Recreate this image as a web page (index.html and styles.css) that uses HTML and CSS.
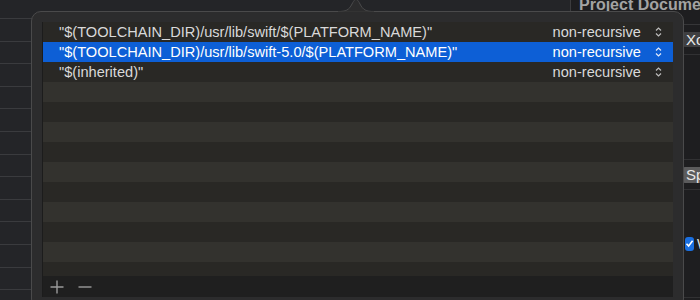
FILE: index.html
```html
<!DOCTYPE html>
<html lang="en">
<head>
    <meta charset="UTF-8">
    <title>Header Search Paths</title>
    <link rel="stylesheet" href="styles.css">
</head>
<body>
    <div class="window">
        <div class="editor">
            <div class="editor-row"></div>
            <div class="editor-row"></div>
            <div class="editor-row"></div>
            <div class="editor-row"></div>
            <div class="editor-row"></div>
            <div class="editor-row"></div>
            <div class="editor-row"></div>
            <div class="editor-row"></div>
            <div class="editor-row"></div>
            <div class="editor-row"></div>
            <div class="editor-row"></div>
            <div class="editor-row"></div>
            <div class="editor-row"></div>
            <div class="editor-row"></div>
        </div>

        <aside class="inspector">
            <h3>Project Document</h3>
            <div class="inspector-field first">
                <span class="popup-button">Xcode 11.0-compatible</span>
            </div>
            <div class="inspector-field tall"></div>
            <div class="inspector-field">
                <span class="popup-button light">Specify</span>
            </div>
            <div class="inspector-field check">
                <span class="checkbox">
                    <svg width="9" height="9" viewBox="0 0 9 9"><path d="M1.5 4.8 L3.6 7 L7.6 1.8" fill="none" stroke="#fff" stroke-width="1.6"/></svg>
                </span>
                <span class="check-label">Workspace</span>
            </div>
        </aside>

        <div class="popover">
            <svg class="popover-arrow" width="36" height="13" viewBox="0 0 36 13">
                <path d="M0 12.5 C8 12.5 11 11 14 5 C16 1 17 0.5 18 0.5 C19 0.5 20 1 22 5 C25 11 28 12.5 36 12.5" fill="#2c2c2d" stroke="#4a4a4b" stroke-width="1"/>
                <rect x="0" y="12.5" width="36" height="1" fill="#2c2c2d"/>
            </svg>
            <div class="path-table">
                <div class="path-list">
                    <div class="path-row">
                        <span class="path-value">"$(TOOLCHAIN_DIR)/usr/lib/swift/$(PLATFORM_NAME)"</span>
                        <span class="path-mode">non-recursive</span>
                        <svg class="stepper" width="7" height="10" viewBox="0 0 7 10"><path d="M1 3.5 L3.5 1 L6 3.5 M1 6.5 L3.5 9 L6 6.5" fill="none" stroke="currentColor" stroke-width="1.2"/></svg>
                    </div>
                    <div class="path-row selected">
                        <span class="path-value">"$(TOOLCHAIN_DIR)/usr/lib/swift-5.0/$(PLATFORM_NAME)"</span>
                        <span class="path-mode">non-recursive</span>
                        <svg class="stepper" width="7" height="10" viewBox="0 0 7 10"><path d="M1 3.5 L3.5 1 L6 3.5 M1 6.5 L3.5 9 L6 6.5" fill="none" stroke="currentColor" stroke-width="1.2"/></svg>
                    </div>
                    <div class="path-row">
                        <span class="path-value">"$(inherited)"</span>
                        <span class="path-mode">non-recursive</span>
                        <svg class="stepper" width="7" height="10" viewBox="0 0 7 10"><path d="M1 3.5 L3.5 1 L6 3.5 M1 6.5 L3.5 9 L6 6.5" fill="none" stroke="currentColor" stroke-width="1.2"/></svg>
                    </div>
                </div>
                <div class="table-actions">
                    <svg width="14" height="14" viewBox="0 0 14 14"><path d="M7 0.5 V13.5 M0.5 7 H13.5" stroke="#9b9b9b" stroke-width="1.4"/></svg>
                    <svg width="14" height="14" viewBox="0 0 14 14"><path d="M0.5 7 H13.5" stroke="#9b9b9b" stroke-width="1.4"/></svg>
                </div>
            </div>
        </div>
    </div>
</body>
</html>
```

FILE: styles.css
```css
:root {
    --window-bg: #1f2023;
    --editor-bg: #242528;
    --popover-bg: #2c2c2d;
    --popover-border: #4a4a4b;
    --row-dark: #292825;
    --row-light: #33322e;
    --selection: #0d5fd6;
    --text-color: #d9d9d9;
    --text-secondary: #a3a3a3;
}

* {
    margin: 0;
    padding: 0;
    box-sizing: border-box;
}

body {
    font-family: 'Liberation Sans', Arial, sans-serif;
    background-color: var(--window-bg);
    color: var(--text-color);
    width: 700px;
    height: 300px;
    overflow: hidden;
}

.window {
    position: relative;
    display: flex;
    width: 700px;
    height: 300px;
    overflow: hidden;
}

.editor {
    flex: 1;
    padding-top: 18px;
    background-color: var(--editor-bg);
}

.editor-row {
    height: 22.6px;
    border-top: 1px solid #3a3b3e;
}

.inspector {
    width: 130px;
    background-color: #1e1e20;
    border-left: 1px solid #3c3c3e;
    padding-left: 8px;
    overflow: hidden;
}

.inspector h3 {
    font-size: 16px;
    font-weight: 700;
    color: var(--text-secondary);
    line-height: 16px;
    margin-top: -3px;
    height: 28px;
    border-bottom: 1px solid #363638;
    white-space: nowrap;
}

.inspector-field {
    display: flex;
    align-items: center;
    gap: 3px;
    height: 30px;
    padding-left: 103px;
    border-bottom: 1px solid #313133;
    white-space: nowrap;
}

.inspector-field.tall {
    height: 105px;
}

.inspector-field.check {
    height: 108px;
    padding-left: 106px;
}

.popup-button {
    font-size: 15px;
    padding: 0 4px;
    line-height: 15px;
    background-color: #3f3f41;
    color: #e8e8e8;
    border-radius: 3px;
}

.popup-button.light {
    background-color: #5b5b5c;
    line-height: 16px;
}

.checkbox {
    display: flex;
    align-items: center;
    justify-content: center;
    width: 12px;
    height: 14px;
    background-color: #1a6fe0;
    border-radius: 3px;
}

.check-label {
    font-size: 14px;
    color: #e0e0e0;
}

.popover {
    position: absolute;
    left: 31px;
    top: 11px;
    width: 653px;
    height: 298px;
    padding: 10px 10px 11px 10px;
    background-color: var(--popover-bg);
    border: 1px solid var(--popover-border);
    border-radius: 10px;
}

.popover-arrow {
    position: absolute;
    left: 306px;
    top: -13px;
}

.path-table {
    display: flex;
    flex-direction: column;
    height: 275px;
    border-left: 1px solid #1c1c1c;
}

.path-list {
    flex: 1;
    overflow: hidden;
    background: repeating-linear-gradient(
        to bottom,
        var(--row-dark) 0,
        var(--row-dark) 20px,
        var(--row-light) 20px,
        var(--row-light) 40px
    );
}

.path-row {
    display: flex;
    align-items: center;
    height: 20px;
    padding-left: 16px;
    padding-right: 11px;
    font-size: 14.6px;
    color: var(--text-color);
    white-space: nowrap;
}

.path-row.selected {
    background-color: var(--selection);
    color: #ffffff;
}

.path-value {
    flex: 1;
}

.path-mode {
    margin-right: 14px;
}

.stepper {
    color: #bcbcbc;
}

.path-row.selected .stepper {
    color: #e4ecfa;
}

.table-actions {
    display: flex;
    align-items: center;
    gap: 14px;
    height: 21px;
    padding-left: 7px;
    background-color: #1f1f1f;
}
```
